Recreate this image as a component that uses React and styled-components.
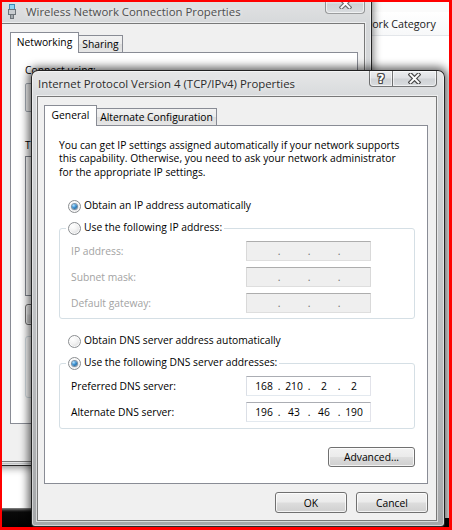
import React from "react";
import styled, { createGlobalStyle, css } from "styled-components";

const UI = `"Open Sans", "Noto Sans", "Liberation Sans", sans-serif`;

const GlobalStyle = createGlobalStyle`
  html, body { margin: 0; padding: 0; background: #ffffff; overflow: hidden; }
  body { font-family: ${UI}; font-size: 10.3px; color: #000; }
  * { box-sizing: border-box; }
`;

const Desktop = styled.div`
  position: relative;
  width: 452px;
  height: 530px;
  overflow: hidden;
  background: #ffffff;
  font-family: ${UI};
  font-size: 10.3px;
`;

const RedFrame = styled.div`
  position: absolute;
  inset: 0;
  border-style: solid;
  border-color: #ff0000;
  border-width: 2px 3px 3px 2px;
  pointer-events: none;
  z-index: 10;
`;

const Taskbar = styled.div`
  position: absolute;
  left: 0;
  right: 0;
  bottom: 0;
  height: 22px;
  z-index: 0;
  background: linear-gradient(#8a8a8a 0, #3a3a3a 2px, #0a0a0a 4px, #000 100%);
`;

/* ---------- explorer window far behind ---------- */
const Explorer = styled.div`
  position: absolute;
  left: 300px;
  top: -2px;
  width: 170px;
  height: 520px;
  z-index: 1;
  background: #ffffff;
  display: flex;
  flex-direction: column;
`;

const ExplorerTop = styled.div`
  height: 14px;
  flex: none;
  background: #fbfbfb;
`;

const ColumnHeader = styled.div`
  height: 24px;
  flex: none;
  display: flex;
  align-items: center;
  padding: 1px 0 0 46px;
  font-size: 10.7px;
  color: #1a1a1a;
  white-space: nowrap;
  background: linear-gradient(#ffffff, #f7f8f9);
  border-bottom: 1px solid #e3e6ea;
`;

/* ---------- glass windows ---------- */
const glass = css`
  position: absolute;
  display: flex;
  flex-direction: column;
  border: 1px solid rgba(18, 18, 18, 0.9);
  border-radius: 7px 7px 4px 4px;
`;

const BackWindow = styled.div`
  ${glass};
  left: -6px;
  top: -7px;
  width: 378px;
  height: 473px;
  z-index: 2;
  padding: 0 6px 3px 6px;
  box-shadow: 0 0 8px 1px rgba(0, 0, 0, 0.55), inset 0 0 0 1px rgba(255, 255, 255, 0.45);
  background: linear-gradient(180deg, #e4e5e6 0px, #d6d8da 30px, #c9cbcd 70%, #c0c2c4 100%);
`;

const MainWindow = styled.div`
  ${glass};
  left: 31px;
  top: 70px;
  width: 414px;
  height: 457px;
  z-index: 3;
  padding: 0 7px 5px 5px;
  box-shadow: 0 0 9px 3px rgba(0, 0, 0, 0.6), inset 0 0 0 1px rgba(255, 255, 255, 0.5);
  background: linear-gradient(180deg, #e6e7e8 0px, #d8dadc 25px, #bdbfc1 60%, #a5a7a9 100%);
`;

const TitleBar = styled.div`
  flex: none;
  height: ${(p) => p.$h}px;
  padding-top: ${(p) => p.$pt || 0}px;
  display: flex;
  align-items: center;
`;

const WindowTitle = styled.div`
  font-size: 11.4px;
  white-space: nowrap;
  margin-left: ${(p) => p.$ml || 0}px;
  color: ${(p) => (p.$inactive ? "#4e4e4e" : "#2c2c2c")};
  text-shadow: 0 0 5px rgba(255, 255, 255, 0.9);
`;

const IconWrap = styled.span`
  display: flex;
  margin-left: 7px;
  margin-top: -1px;
`;

const CaptionGroup = styled.div`
  display: flex;
  align-self: flex-start;
  margin-left: auto;
  margin-top: ${(p) => p.$mt || 0}px;
`;

const CaptionBtn = styled.div`
  width: ${(p) => p.$w}px;
  height: ${(p) => p.$h}px;
  display: flex;
  align-items: center;
  justify-content: center;
  border: 1px solid ${(p) => (p.$inactive ? "rgba(60,60,60,0.45)" : "rgba(40,40,40,0.6)")};
  border-top: none;
  background: linear-gradient(180deg, #eceef0 0%, #dee0e3 48%, #cfd2d5 52%, #d9dcdf 100%);
  box-shadow: inset 0 0 0 1px rgba(255, 255, 255, 0.6);
  & + & {
    border-left: none;
  }
  ${(p) => p.$first && "border-bottom-left-radius: 4px;"}
  ${(p) => p.$last && "border-bottom-right-radius: 4px;"}
`;

const HelpMark = styled.span`
  font-family: "DejaVu Sans", "Liberation Sans", sans-serif;
  font-weight: bold;
  font-size: 12px;
  line-height: 12px;
  color: #ffffff;
  text-shadow: 1px 0 0 #4a4a4a, -1px 0 0 #4a4a4a, 0 1px 0 #4a4a4a, 0 -1px 0 #4a4a4a,
    1px 1px 0 #4a4a4a, -1px -1px 0 #4a4a4a, 1px -1px 0 #4a4a4a, -1px 1px 0 #4a4a4a;
`;

function CloseGlyph({ color = "#4a4a4a" }) {
  return (
    <svg width="13" height="11" viewBox="0 0 13 11">
      <path d="M2.6 1.6 L10.4 9.4 M10.4 1.6 L2.6 9.4" stroke={color} strokeWidth="4.2" strokeLinecap="square" fill="none" />
      <path d="M2.6 1.6 L10.4 9.4 M10.4 1.6 L2.6 9.4" stroke="#ffffff" strokeWidth="2" strokeLinecap="square" fill="none" />
    </svg>
  );
}

function AdapterIcon() {
  return (
    <svg width="8" height="15" viewBox="0 0 8 15">
      <rect x="1.5" y="0.5" width="5" height="5" fill="#8fd6f4" stroke="#3c8ab8" />
      <rect x="0.5" y="5.5" width="7" height="5" fill="#c9cdd1" stroke="#6e757b" />
      <rect x="2.5" y="10.5" width="3" height="4" fill="#a6abb0" stroke="#6e757b" />
    </svg>
  );
}

/* ---------- client contents ---------- */
const Client = styled.div`
  flex: 1;
  min-height: 0;
  display: flex;
  flex-direction: column;
  background: #f0f0f0;
  border: 1px solid rgba(0, 0, 0, 0.5);
  box-shadow: 0 0 0 1px rgba(255, 255, 255, 0.55);
  padding: ${(p) => p.$pad};
`;

const TabStrip = styled.div`
  flex: none;
  display: flex;
  align-items: flex-end;
  height: 21px;
  margin-bottom: -1px;
  position: relative;
  z-index: 1;
`;

const Tab = styled.div`
  width: ${(p) => p.$w}px;
  display: flex;
  align-items: center;
  justify-content: center;
  white-space: nowrap;
  border: 1px solid #898c95;
  border-bottom: none;
  ${(p) =>
    p.$active
      ? css`
          height: 21px;
          padding-bottom: 2px;
          background: #ffffff;
        `
      : css`
          height: 17px;
          margin-bottom: 1px;
          margin-left: -1px;
          background: linear-gradient(180deg, #f2f2f2 0%, #ebebeb 50%, #dddddd 51%, #e6e6e6 100%);
        `}
`;

const Panel = styled.div`
  flex: 1;
  min-height: 0;
  display: flex;
  flex-direction: column;
  background: #ffffff;
  border: 1px solid #898c95;
  padding: ${(p) => p.$pad};
`;

const Text = styled.div`
  line-height: 16px;
  height: 16px;
  white-space: nowrap;
  color: #000;
  margin-top: ${(p) => p.$mt || 0}px;
`;

const Para = styled.p`
  margin: 0;
  line-height: 13.3px;
  white-space: nowrap;
`;

const RadioRow = styled.div`
  display: flex;
  align-items: center;
  gap: 3px;
  height: 16px;
  line-height: 16px;
  white-space: nowrap;
  margin-top: ${(p) => p.$mt || 0}px;
  margin-left: 9px;
`;

const RadioDot = styled.span`
  position: relative;
  flex: none;
  width: 13px;
  height: 13px;
  margin-top: 3px;
  border-radius: 50%;
  border: 1px solid #8b8e91;
  background: radial-gradient(circle at 35% 30%, #ffffff 0%, #f3f3f3 40%, #d2d3d4 100%);
  box-shadow: inset 0 0 0 1px rgba(255, 255, 255, 0.8);
  ${(p) =>
    p.$checked &&
    css`
      &::after {
        content: "";
        position: absolute;
        left: 3px;
        top: 3px;
        width: 5px;
        height: 5px;
        border-radius: 50%;
        background: radial-gradient(circle at 35% 30%, #b2e2ff 0%, #3a8fd0 45%, #0e4c7c 100%);
        box-shadow: 0 0 0 1px rgba(22, 64, 104, 0.55);
      }
    `}
`;

const Group = styled.div`
  display: flex;
  flex-direction: column;
  border: 1px solid #d5dfe5;
  border-radius: 3px;
  margin-top: ${(p) => p.$mt || 0}px;
  padding-bottom: ${(p) => p.$pb || 0}px;
  height: ${(p) => (p.$h ? `${p.$h}px` : "auto")};
`;

const Legend = styled.div`
  align-self: flex-start;
  display: flex;
  align-items: center;
  gap: 3px;
  height: 16px;
  line-height: 16px;
  white-space: nowrap;
  margin: -10px 0 0 6px;
  padding: 0 2px;
  background: #ffffff;
`;

const FieldRow = styled.div`
  display: flex;
  align-items: center;
  height: 20px;
  margin: 6px 0 0 11px;
`;

const FieldLabel = styled.span`
  width: 175px;
  flex: none;
  line-height: 16px;
  white-space: nowrap;
  color: ${(p) => (p.$disabled ? "#a3a3a3" : "#000")};
`;

const IpBox = styled.div`
  width: 125px;
  height: 20px;
  display: flex;
  align-items: center;
  padding-left: 4px;
  border: 1px solid;
  border-color: ${(p) => (p.$disabled ? "#adadad #d9d9d9 #dedede #d9d9d9" : "#abadb3 #e2e3ea #e3e9ef #dbdfe6")};
  background: ${(p) => (p.$disabled ? "#efefef" : "#ffffff")};
  line-height: 16px;
`;

const Octet = styled.span`
  width: 26px;
  text-align: center;
`;

const IpDot = styled.span`
  width: 4px;
  text-align: center;
  color: ${(p) => (p.$disabled ? "#6d6d6d" : "#000")};
`;

function IpField({ values = ["", "", "", ""], disabled }) {
  return (
    <IpBox $disabled={disabled}>
      {values.map((v, i) => (
        <React.Fragment key={i}>
          {i > 0 && <IpDot $disabled={disabled}>.</IpDot>}
          <Octet>{v}</Octet>
        </React.Fragment>
      ))}
    </IpBox>
  );
}

const PushButton = styled.button`
  flex: none;
  width: ${(p) => p.$w}px;
  height: ${(p) => p.$h || 21}px;
  margin: 0;
  padding: 0;
  display: flex;
  align-items: center;
  justify-content: center;
  font: inherit;
  line-height: 16px;
  color: #000;
  border: 1px solid #707070;
  border-radius: 3px;
  background: linear-gradient(180deg, #f2f2f2 0%, #ebebeb 48%, #dddddd 52%, #cfcfcf 100%);
  box-shadow: inset 0 0 0 1px rgba(255, 255, 255, 0.75);
  align-self: ${(p) => p.$align || "auto"};
  margin-top: ${(p) => p.$mt || 0}px;
`;

const Footer = styled.div`
  flex: none;
  display: flex;
  justify-content: flex-end;
  gap: 9px;
  margin-top: 8px;
`;

/* back window specific parts (mostly covered by the front dialog) */
const AdapterField = styled.div`
  height: 29px;
  margin-top: 5px;
  border: 1px solid #a5acb5;
  border-radius: 2px;
  background: #f4f4f4;
`;

const Spacer = styled.div`
  height: ${(p) => p.$h}px;
  flex: none;
`;

const ItemList = styled.div`
  height: 140px;
  margin-top: 3px;
  border: 1px solid #828790;
  background: #ffffff;
`;

const LeftRow = styled.div`
  display: flex;
  gap: 7px;
  margin-top: ${(p) => p.$mt || 0}px;
`;

export default function App() {
  return (
    <>
      <GlobalStyle />
      <Desktop>
        <Taskbar />

        <Explorer>
          <ExplorerTop />
          <ColumnHeader>Network Category</ColumnHeader>
        </Explorer>

        <BackWindow>
          <TitleBar $h={29} $pt={6}>
            <IconWrap>
              <AdapterIcon />
            </IconWrap>
            <WindowTitle $inactive $ml={10}>
              Wireless Network Connection Properties
            </WindowTitle>
            <CaptionGroup $mt={-6}>
              <CaptionBtn $w={40} $h={20} $first $last $inactive>
                <CloseGlyph color="#707070" />
              </CaptionBtn>
            </CaptionGroup>
          </TitleBar>
          <Client $pad="8px 6px 8px 8px">
            <TabStrip>
              <Tab $active $w={69}>
                Networking
              </Tab>
              <Tab $w={45}>Sharing</Tab>
            </TabStrip>
            <Panel $pad="9px 14px 0 14px">
              <Text>Connect using:</Text>
              <AdapterField />
              <Spacer $h={25} />
              <Text>T</Text>
              <ItemList />
              <LeftRow $mt={8}>
                <PushButton $w={84} />
                <PushButton $w={84} />
                <PushButton $w={84} />
              </LeftRow>
              <Group $mt={11} $h={62} />
            </Panel>
            <Footer>
              <PushButton $w={72} />
              <PushButton $w={72} />
            </Footer>
          </Client>
        </BackWindow>

        <MainWindow>
          <TitleBar $h={25}>
            <WindowTitle $ml={1}>Internet Protocol Version 4 (TCP/IPv4) Properties</WindowTitle>
            <CaptionGroup>
              <CaptionBtn $w={24} $h={16} $first>
                <HelpMark>?</HelpMark>
              </CaptionBtn>
              <CaptionBtn $w={44} $h={16} $last>
                <CloseGlyph />
              </CaptionBtn>
            </CaptionGroup>
          </TitleBar>
          <Client $pad="8px 8px 7px 6px">
            <TabStrip>
              <Tab $active $w={53}>
                General
              </Tab>
              <Tab $w={121}>Alternate Configuration</Tab>
            </TabStrip>
            <Panel $pad="13px 12px 0 14px">
              <Para>
                You can get IP settings assigned automatically if your network supports
                <br />
                this capability. Otherwise, you need to ask your network administrator
                <br />
                for the appropriate IP settings.
              </Para>

              <RadioRow $mt={18}>
                <RadioDot $checked />
                Obtain an IP address automatically
              </RadioRow>

              <Group $mt={15} $pb={5}>
                <Legend>
                  <RadioDot />
                  Use the following IP address:
                </Legend>
                <FieldRow>
                  <FieldLabel $disabled>IP address:</FieldLabel>
                  <IpField disabled />
                </FieldRow>
                <FieldRow>
                  <FieldLabel $disabled>Subnet mask:</FieldLabel>
                  <IpField disabled />
                </FieldRow>
                <FieldRow>
                  <FieldLabel $disabled>Default gateway:</FieldLabel>
                  <IpField disabled />
                </FieldRow>
              </Group>

              <RadioRow $mt={13}>
                <RadioDot />
                Obtain DNS server address automatically
              </RadioRow>

              <Group $mt={15} $pb={6}>
                <Legend>
                  <RadioDot $checked />
                  Use the following DNS server addresses:
                </Legend>
                <FieldRow>
                  <FieldLabel>Preferred DNS server:</FieldLabel>
                  <IpField values={["168", "210", "2", "2"]} />
                </FieldRow>
                <FieldRow>
                  <FieldLabel>Alternate DNS server:</FieldLabel>
                  <IpField values={["196", "43", "46", "190"]} />
                </FieldRow>
              </Group>

              <PushButton $w={87} $h={20} $align="flex-end" $mt={18}>
                Advanced...
              </PushButton>
            </Panel>
            <Footer>
              <PushButton $w={72}>OK</PushButton>
              <PushButton $w={72}>Cancel</PushButton>
            </Footer>
          </Client>
        </MainWindow>

        <RedFrame />
      </Desktop>
    </>
  );
}
